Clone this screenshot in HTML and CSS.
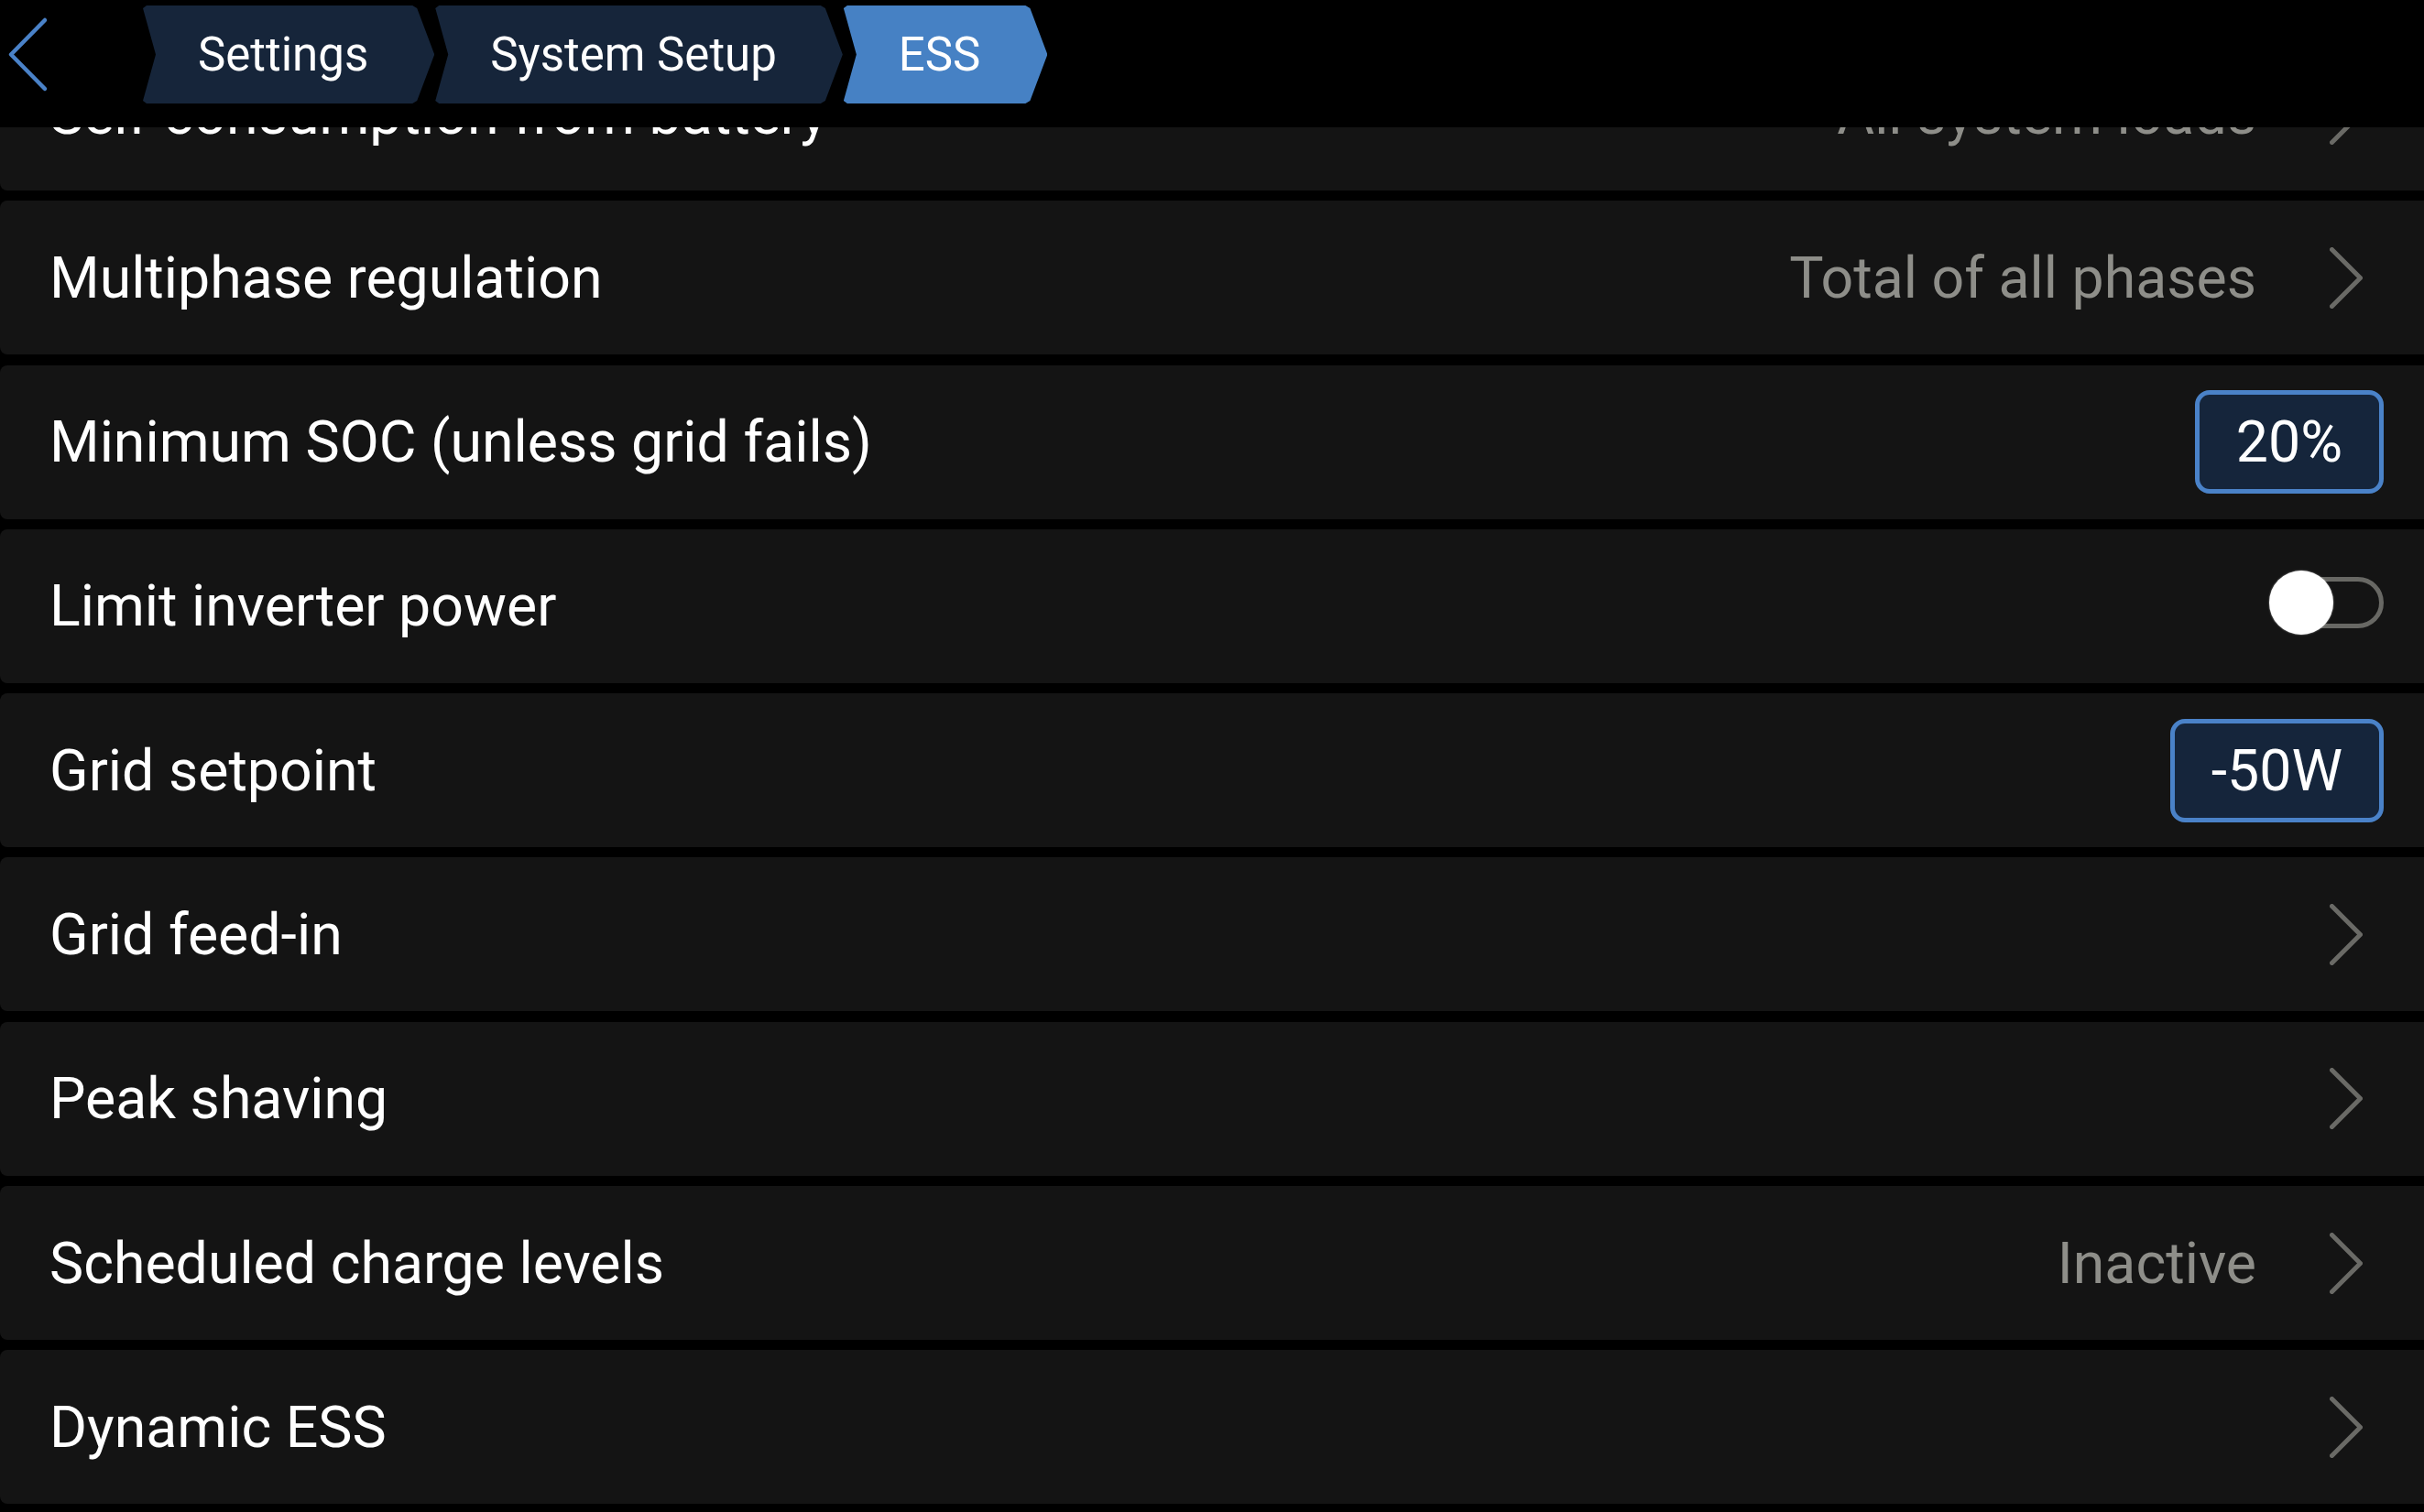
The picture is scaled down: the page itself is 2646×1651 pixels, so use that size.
FILE: index.html
```html
<!DOCTYPE html>
<html lang="en">
<head>
    <meta charset="UTF-8">
    <meta name="viewport" content="width=device-width, initial-scale=1.0">
    <title>ESS</title>
    <link rel="stylesheet" href="styles.css">
</head>
<body>

<div class="top-bar">
    <div class="back-button">
        <svg width="48" height="107" viewBox="0 0 48 107">
            <path d="M41 16 L4 53.5 L41 91" fill="none" stroke="#4a82c8" stroke-width="4.5" stroke-linecap="round" stroke-linejoin="round"/>
        </svg>
    </div>
    <div class="breadcrumbs">
        <div class="crumb">Settings</div>
        <div class="crumb">System Setup</div>
        <div class="crumb current">ESS</div>
    </div>
</div>

<div class="settings-list">
    <div class="setting-row">
        <span class="setting-label">Self-consumption from battery</span>
        <span class="setting-value">All system loads</span>
        <svg class="chevron" width="36" height="67" viewBox="0 0 36 67"><path d="M2.5 2.5 L33.5 33.5 L2.5 64.5"/></svg>
    </div>
    <div class="setting-row">
        <span class="setting-label">Multiphase regulation</span>
        <span class="setting-value">Total of all phases</span>
        <svg class="chevron" width="36" height="67" viewBox="0 0 36 67"><path d="M2.5 2.5 L33.5 33.5 L2.5 64.5"/></svg>
    </div>
    <div class="setting-row">
        <span class="setting-label">Minimum SOC (unless grid fails)</span>
        <span class="spin-box">20%</span>
    </div>
    <div class="setting-row">
        <span class="setting-label">Limit inverter power</span>
        <span class="switch"><span class="switch-knob"></span></span>
    </div>
    <div class="setting-row">
        <span class="setting-label">Grid setpoint</span>
        <span class="spin-box">-50W</span>
    </div>
    <div class="setting-row">
        <span class="setting-label">Grid feed-in</span>
        <svg class="chevron" width="36" height="67" viewBox="0 0 36 67"><path d="M2.5 2.5 L33.5 33.5 L2.5 64.5"/></svg>
    </div>
    <div class="setting-row">
        <span class="setting-label">Peak shaving</span>
        <svg class="chevron" width="36" height="67" viewBox="0 0 36 67"><path d="M2.5 2.5 L33.5 33.5 L2.5 64.5"/></svg>
    </div>
    <div class="setting-row">
        <span class="setting-label">Scheduled charge levels</span>
        <span class="setting-value">Inactive</span>
        <svg class="chevron" width="36" height="67" viewBox="0 0 36 67"><path d="M2.5 2.5 L33.5 33.5 L2.5 64.5"/></svg>
    </div>
    <div class="setting-row">
        <span class="setting-label">Dynamic ESS</span>
        <svg class="chevron" width="36" height="67" viewBox="0 0 36 67"><path d="M2.5 2.5 L33.5 33.5 L2.5 64.5"/></svg>
    </div>
</div>

</body>
</html>
```

FILE: styles.css
```css
body {
    margin: 0;
    background: #000;
    font-family: Roboto, "Noto Sans", sans-serif;
    color: #fff;
    height: 1651px;
    overflow: hidden;
    position: relative;
}

/* header that sits over the scrolled list */
.top-bar {
    position: absolute;
    top: 0;
    left: 0;
    right: 0;
    height: 139px;
    background: #000;
    display: flex;
    align-items: flex-start;
    padding: 6px 0 0 8px;
    box-sizing: border-box;
    z-index: 2;
}
.back-button {
    width: 147px;
    height: 107px;
}
.back-button svg {
    display: block;
}
.breadcrumbs {
    display: flex;
}
.crumb {
    height: 107px;
    display: flex;
    align-items: center;
    padding: 0 72px 0 61px;
    font-size: 51px;
    background: #16253a;
    clip-path: polygon(5px 0, calc(100% - 24px) 0, calc(100% - 19px) 3px, 100% 50%, calc(100% - 19px) calc(100% - 3px), calc(100% - 24px) 100%, 5px 100%, 1px calc(100% - 3px), 15px 50%, 1px 3px);
}
.crumb.current {
    background: #4681c4;
    padding-right: 73px;
}

.settings-list {
    display: flex;
    flex-direction: column;
    gap: 11.3px;
    padding-top: 40px;
}
.setting-row {
    height: 168px;
    background: #141414;
    border-radius: 8px 0 0 8px;
    display: flex;
    align-items: center;
    padding: 0 44px 0 54px;
    font-size: 62.6px;
}
.setting-label {
    flex: 1;
    white-space: nowrap;
}
.setting-value {
    color: #8e8e89;
    margin-right: 80px;
}
.chevron {
    margin-right: 23px;
    flex-shrink: 0;
}
.chevron path {
    fill: none;
    stroke: #6a6a66;
    stroke-width: 5;
    stroke-linecap: round;
    stroke-linejoin: round;
}

.spin-box {
    height: 113px;
    box-sizing: border-box;
    display: flex;
    align-items: center;
    padding: 0 40px;
    border: 5px solid #4a82c8;
    border-radius: 16px;
    background: #15253b;
}

.switch {
    position: relative;
    width: 116px;
    height: 56px;
    margin-bottom: 8px;
    box-sizing: border-box;
    border: 5px solid #686864;
    border-radius: 28px;
}
.switch-knob {
    position: absolute;
    left: -14px;
    top: -12px;
    width: 70px;
    height: 70px;
    border-radius: 50%;
    background: #fff;
    box-shadow: 0 0 2px rgba(255, 255, 255, 0.6);
}
```
